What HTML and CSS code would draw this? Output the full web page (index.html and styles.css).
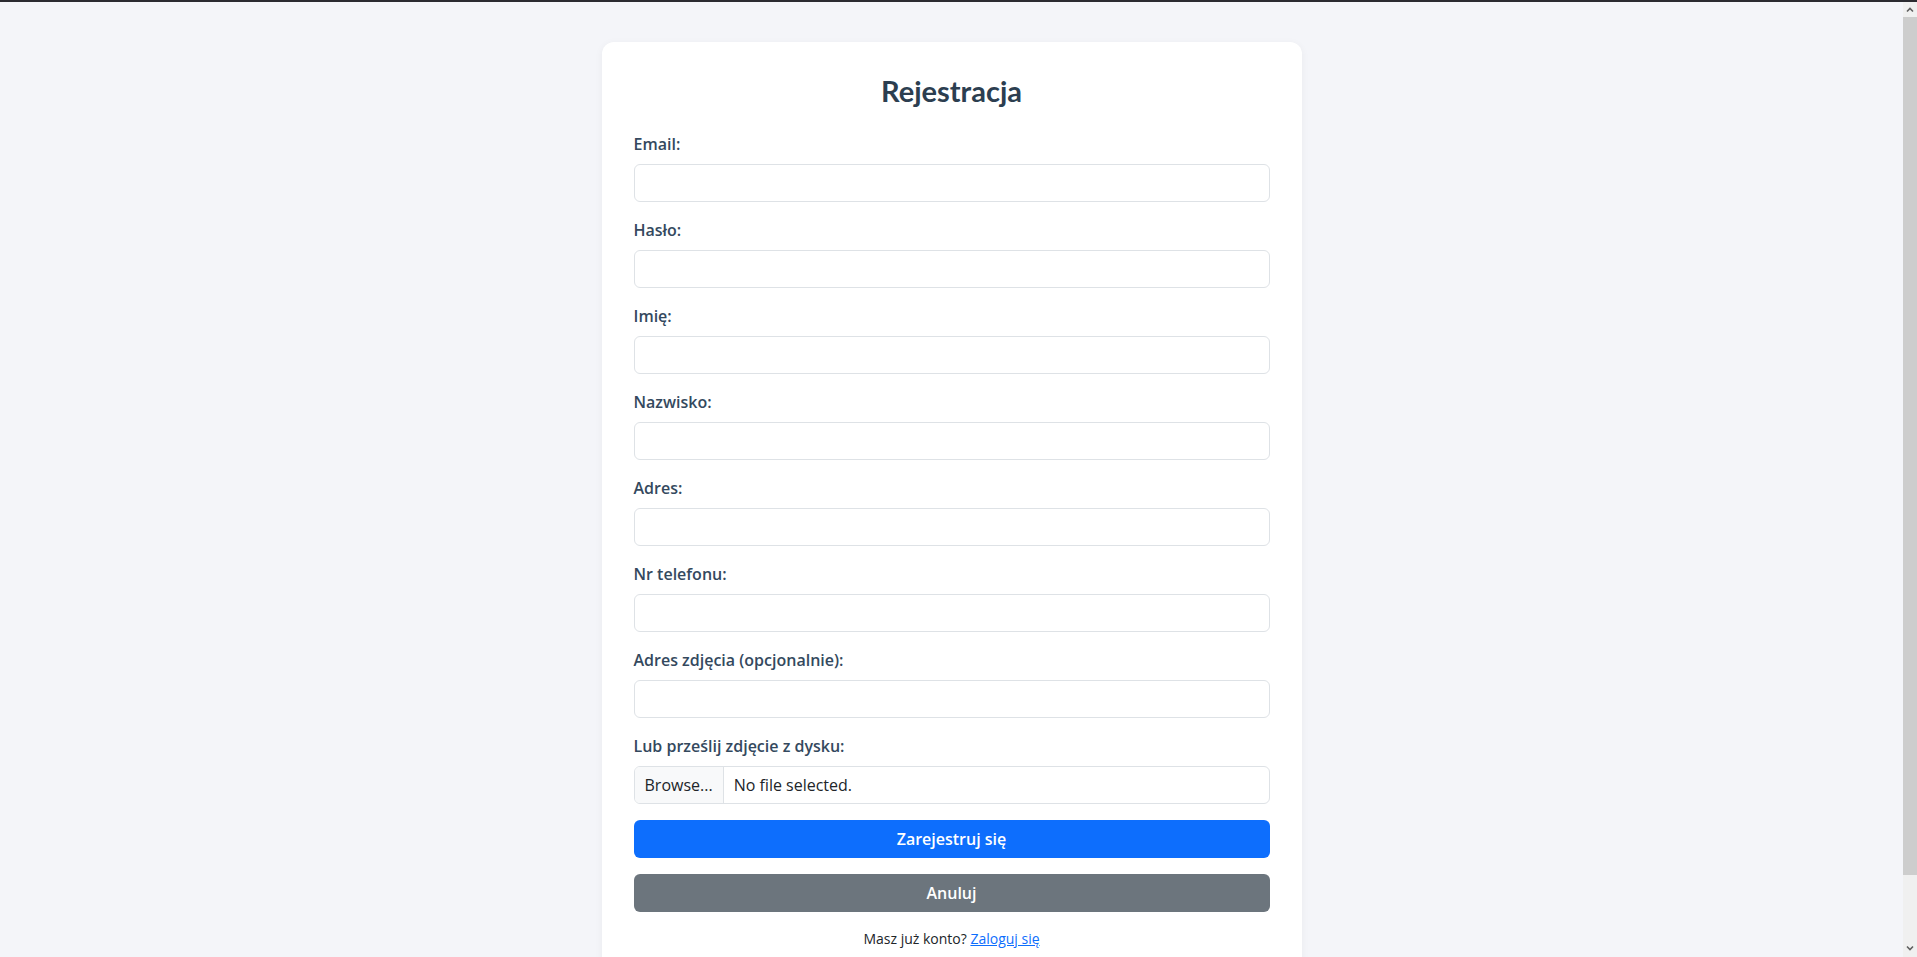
FILE: index.html
```html
<!DOCTYPE html>
<html lang="pl">
<head>
<meta charset="utf-8">
<title>Rejestracja</title>
<link rel="stylesheet" href="styles.css">
</head>
<body>
<div class="topline"></div>
<main class="page">
  <div class="card">
    <h2 class="title">Rejestracja</h2>
    <form class="form">
      <div class="group">
        <label class="label">Email:</label>
        <input class="control" type="text">
      </div>
      <div class="group">
        <label class="label">Hasło:</label>
        <input class="control" type="text">
      </div>
      <div class="group">
        <label class="label">Imię:</label>
        <input class="control" type="text">
      </div>
      <div class="group">
        <label class="label">Nazwisko:</label>
        <input class="control" type="text">
      </div>
      <div class="group">
        <label class="label">Adres:</label>
        <input class="control" type="text">
      </div>
      <div class="group">
        <label class="label">Nr telefonu:</label>
        <input class="control" type="text">
      </div>
      <div class="group">
        <label class="label">Adres zdjęcia (opcjonalnie):</label>
        <input class="control" type="text">
      </div>
      <div class="group">
        <label class="label">Lub prześlij zdjęcie z dysku:</label>
        <div class="file">
          <span class="file-btn">Browse...</span>
          <span class="file-name">No file selected.</span>
        </div>
      </div>
      <button type="button" class="btn btn-primary">Zarejestruj się</button>
      <button type="button" class="btn btn-secondary">Anuluj</button>
    </form>
    <p class="login">Masz już konto? <a href="#" class="link">Zaloguj się</a></p>
  </div>
</main>
<div class="scrollbar" aria-hidden="true">
  <svg class="arrow arrow-up" width="14" height="14" viewBox="0 0 14 14"><path d="M4 8.5 L7 5.5 L10 8.5" fill="none" stroke="#606060" stroke-width="1.6"/></svg>
  <div class="thumb"></div>
  <svg class="arrow arrow-down" width="14" height="14" viewBox="0 0 14 14"><path d="M4 5.5 L7 8.5 L10 5.5" fill="none" stroke="#606060" stroke-width="1.6"/></svg>
</div>
</body>
</html>
```
FILE: styles.css
```css
* { box-sizing: border-box; }
html, body { margin: 0; padding: 0; }
body {
  background: #f4f5f9;
  font-family: "Segoe UI", "Open Sans", "Noto Sans", sans-serif;
  color: #212529;
}
.topline { height: 2px; background: #2b2b31; position: relative; z-index: 2; }
.page {
  display: flex;
  justify-content: center;
  padding: 40px 14px 48px 0;
}
.card {
  width: 700px;
  background: #fff;
  border-radius: 12px;
  box-shadow: 0 2px 8px rgba(0,0,0,0.05);
  padding: 32px;
}
.title {
  margin: 0 0 23px;
  text-align: center;
  font-family: "Lato", "Open Sans", sans-serif;
  font-size: 29px;
  line-height: 1.2;
  font-weight: 700;
  color: #2c3e50;
}
.form { display: flex; flex-direction: column; }
.group { display: flex; flex-direction: column; margin-bottom: 16px; }
.label {
  font-size: 16px;
  line-height: 24px;
  font-weight: 600;
  color: #34495e;
  margin-bottom: 8px;
}
.control {
  height: 38px;
  border: 1px solid #dee2e6;
  border-radius: 6px;
  padding: 6px 12px;
  font: inherit;
  font-size: 16px;
  background: #fff;
}
.file {
  display: flex;
  height: 38px;
  border: 1px solid #dee2e6;
  border-radius: 6px;
  overflow: hidden;
  font-size: 16px;
  line-height: 24px;
}
.file-btn {
  display: flex;
  align-items: center;
  padding: 0 10px;
  background: #f8f9fa;
  border-right: 1px solid #dee2e6;
  color: #212529;
}
.file-name {
  display: flex;
  align-items: center;
  padding: 0 10px;
  color: #212529;
}
.btn {
  height: 38px;
  border: none;
  border-radius: 6px;
  color: #fff;
  font: inherit;
  font-size: 16px;
  font-weight: 600;
  cursor: pointer;
}
.btn-primary { background: #0d6efd; margin-bottom: 16px; }
.btn-secondary { background: #6c757d; }
.login {
  margin: 16px 0 0;
  text-align: center;
  font-size: 14px;
  line-height: 21px;
}
.link { color: #0d6efd; }

.scrollbar {
  position: fixed;
  top: 2px;
  right: 0;
  bottom: 0;
  width: 14px;
  background: #f0f0f0;
  display: flex;
  flex-direction: column;
  align-items: center;
}
.arrow { flex: none; }
.arrow-up { margin-top: 1px; }
.thumb {
  flex: none;
  width: 14px;
  height: 858px;
  background: #cdcdcd;
}
.arrow-down { margin-top: auto; margin-bottom: 2px; }
```
